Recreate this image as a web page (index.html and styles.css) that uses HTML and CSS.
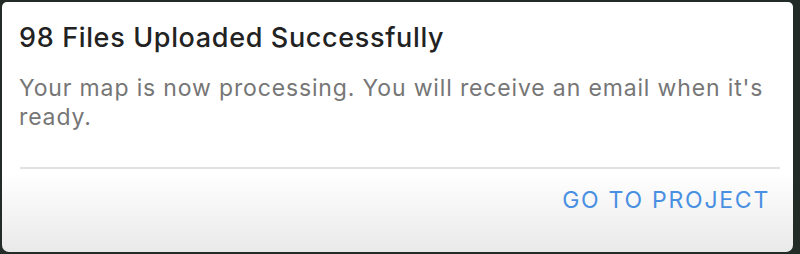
FILE: index.html
```html
<!DOCTYPE html>
<html>
<head>
<meta charset="utf-8">
<link rel="stylesheet" href="styles.css">
</head>
<body>
<div class="card">
  <div class="content">
    <h1 class="title">98 Files Uploaded Successfully</h1>
    <p class="message">Your map is now processing. You will receive an email when it's ready.</p>
  </div>
  <div class="divider"></div>
  <div class="actions">
    <button class="action">GO TO PROJECT</button>
  </div>
</div>
</body>
</html>
```

FILE: styles.css
```css
html, body {
  margin: 0;
  padding: 0;
}
body {
  background: #232b27;
  font-family: Inter, "Noto Sans", sans-serif;
  padding: 2px 7px 2px 2px;
  box-sizing: border-box;
  height: 254px;
}
.card {
  height: 250px;
  box-sizing: border-box;
  border-radius: 5px 5px 7px 7px;
  background: linear-gradient(to bottom, #ffffff 0px, #ffffff 172px, #e9e9e9 250px);
  display: flex;
  flex-direction: column;
  padding: 20px 13px 0 17px;
}
.title {
  margin: 0;
  font-size: 27px;
  font-weight: 500;
  letter-spacing: 0.65px;
  color: #222222;
  line-height: 32px;
}
.message {
  margin: 20px 0 0;
  font-size: 23px;
  line-height: 29px;
  letter-spacing: 0.85px;
  color: #767676;
}
.divider {
  margin-top: 35px;
  margin-left: 1px;
  height: 2px;
  background: #e2e2e2;
}
.actions {
  display: flex;
  justify-content: flex-end;
  padding-top: 17px;
  padding-right: 10px;
}
.action {
  background: none;
  border: none;
  padding: 0;
  font-family: Inter, "Noto Sans", sans-serif;
  font-size: 23px;
  font-weight: 400;
  letter-spacing: 1.75px;
  color: #4a90e2;
  line-height: 28px;
}
```
